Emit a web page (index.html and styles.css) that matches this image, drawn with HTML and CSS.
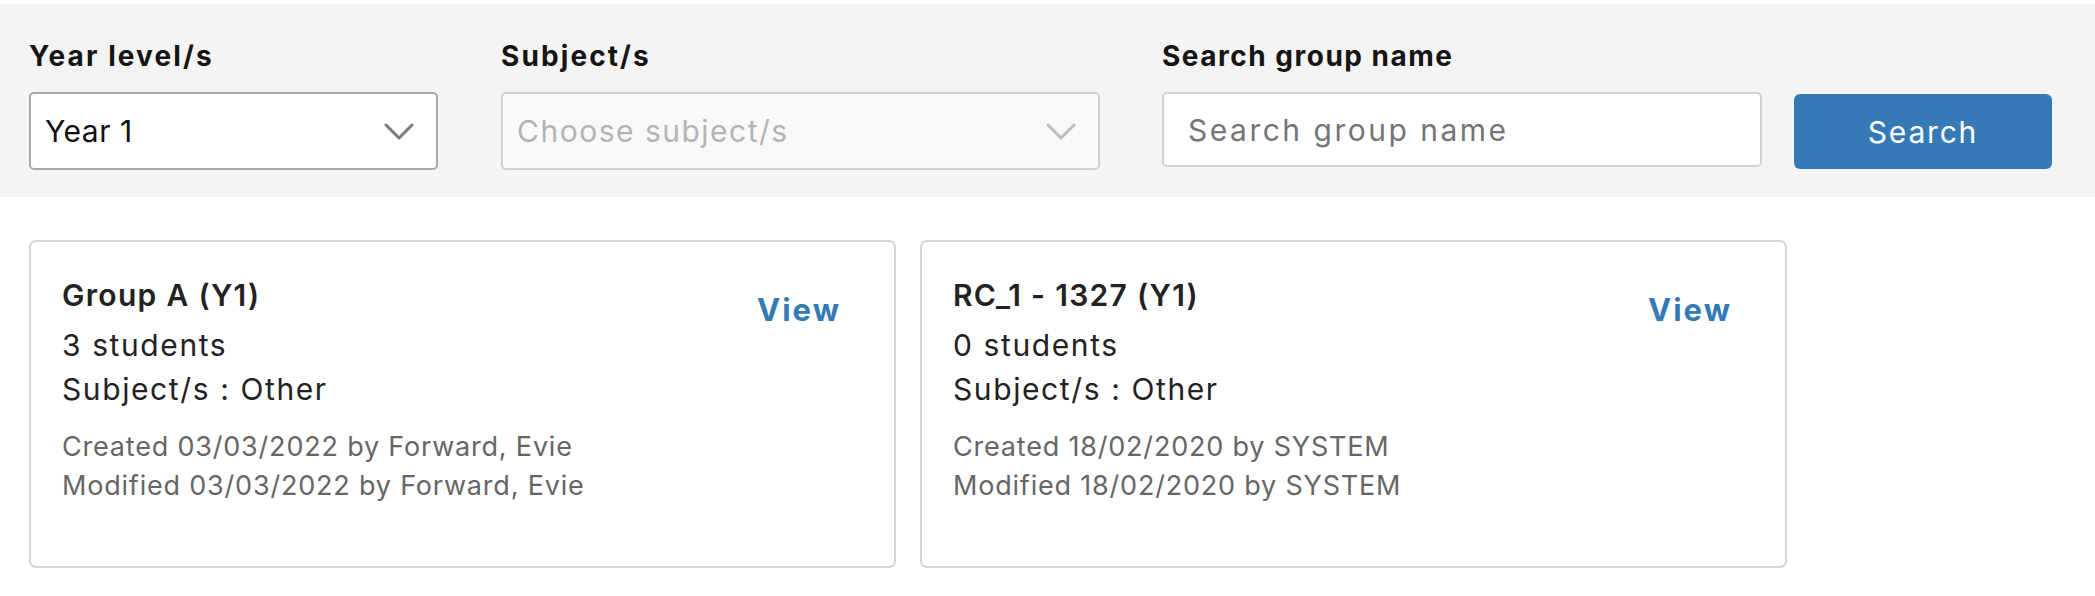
FILE: index.html
```html
<!DOCTYPE html>
<html lang="en">
<head>
<meta charset="utf-8">
<title>Groups</title>
<link rel="stylesheet" href="styles.css">
</head>
<body>
<div class="filters">
  <div class="field field-year">
    <div class="label">Year level/s</div>
    <div class="select">
      <span class="select-value">Year 1</span>
      <svg class="chevron" width="30" height="17" viewBox="0 0 30 17"><path d="M2 2 L15 15 L28 2" fill="none" stroke="#7a7a7a" stroke-width="3" stroke-linecap="round" stroke-linejoin="round"/></svg>
    </div>
  </div>
  <div class="field field-subject">
    <div class="label">Subject/s</div>
    <div class="select select-disabled">
      <span class="select-placeholder">Choose subject/s</span>
      <svg class="chevron" width="30" height="17" viewBox="0 0 30 17"><path d="M2 2 L15 15 L28 2" fill="none" stroke="#bdbdbd" stroke-width="3" stroke-linecap="round" stroke-linejoin="round"/></svg>
    </div>
  </div>
  <div class="field field-search">
    <div class="label">Search group name</div>
    <input class="text-input" type="text" placeholder="Search group name">
  </div>
  <button class="btn-search" type="button">Search</button>
</div>

<div class="cards">
  <div class="card">
    <div class="card-body">
      <div class="card-title">Group A (Y1)</div>
      <div class="card-line">3 students</div>
      <div class="card-line">Subject/s : Other</div>
      <div class="card-meta">
        <div>Created 03/03/2022 by Forward, Evie</div>
        <div>Modified 03/03/2022 by Forward, Evie</div>
      </div>
    </div>
    <a class="card-view" href="#">View</a>
  </div>
  <div class="card">
    <div class="card-body">
      <div class="card-title">RC_1 - 1327 (Y1)</div>
      <div class="card-line">0 students</div>
      <div class="card-line">Subject/s : Other</div>
      <div class="card-meta">
        <div>Created 18/02/2020 by SYSTEM</div>
        <div>Modified 18/02/2020 by SYSTEM</div>
      </div>
    </div>
    <a class="card-view" href="#">View</a>
  </div>
</div>
</body>
</html>
```
FILE: styles.css
```css
* { box-sizing: border-box; }
html, body { margin: 0; padding: 0; background: #ffffff; }
body {
  font-family: "Inter", "Noto Sans", "DejaVu Sans", sans-serif;
  color: #222222;
  padding-top: 4px;
}
.filters {
  background: #f4f4f4;
  height: 193px;
  display: flex;
  align-items: flex-end;
  padding: 0 29px 27px 29px;
}
.field { display: flex; flex-direction: column; }
.field-year { width: 409px; }
.field-subject { width: 599px; margin-left: 63px; }
.field-search { width: 600px; margin-left: 62px; }
.label {
  font-size: 28px;
  font-weight: 700;
  letter-spacing: 1.5px;
  color: #151515;
  line-height: 36px;
  margin-bottom: 18px;
}
.field-year .label,
.field-subject .label { letter-spacing: 2.1px; }
.select {
  height: 78px;
  border: 2px solid #a8a8a8;
  border-radius: 5px;
  background: #ffffff;
  display: flex;
  align-items: center;
  justify-content: space-between;
  padding: 0 22px 0 14px;
  font-size: 30px;
  color: #111111;
}
.select-value { letter-spacing: 0.5px; }
.select-disabled {
  background: #f9f9f9;
  border-color: #d0d0d0;
}
.select-placeholder { color: #b4b4b4; letter-spacing: 1.5px; }
.chevron { display: block; }
.text-input {
  height: 75px;
  border: 2px solid #d2d2d2;
  border-radius: 5px;
  background: #ffffff;
  padding: 0 24px;
  font-family: inherit;
  font-size: 30px;
  letter-spacing: 2.5px;
  color: #222222;
  outline: none;
  margin-bottom: 3px;
}
.text-input::placeholder { color: #757575; }
.btn-search {
  width: 258px;
  height: 75px;
  margin-left: 32px;
  margin-bottom: 1px;
  background: #357ab6;
  border: none;
  border-radius: 6px;
  color: #ffffff;
  font-family: inherit;
  font-size: 30px;
  letter-spacing: 1.8px;
  padding: 0;
}
.cards {
  display: flex;
  gap: 24px;
  padding: 43px 29px 0 29px;
}
.card {
  width: 867px;
  height: 328px;
  border: 2px solid #d4d4d4;
  border-radius: 7px;
  display: flex;
  justify-content: space-between;
  align-items: flex-start;
  padding: 33px 53px 0 31px;
}
.card-title {
  font-size: 30px;
  font-weight: 600;
  letter-spacing: 1.3px;
  line-height: 40px;
  color: #222222;
  margin-bottom: 8px;
}
.card-line {
  font-size: 30px;
  letter-spacing: 1.6px;
  line-height: 44px;
  color: #222222;
}
.card-meta {
  margin-top: 16px;
  font-size: 27px;
  letter-spacing: 0.8px;
  line-height: 39px;
  color: #666666;
}
.card-view {
  margin-top: 15px;
  font-size: 31px;
  font-weight: 700;
  letter-spacing: 2px;
  line-height: 40px;
  color: #337ab7;
  text-decoration: none;
}
```
